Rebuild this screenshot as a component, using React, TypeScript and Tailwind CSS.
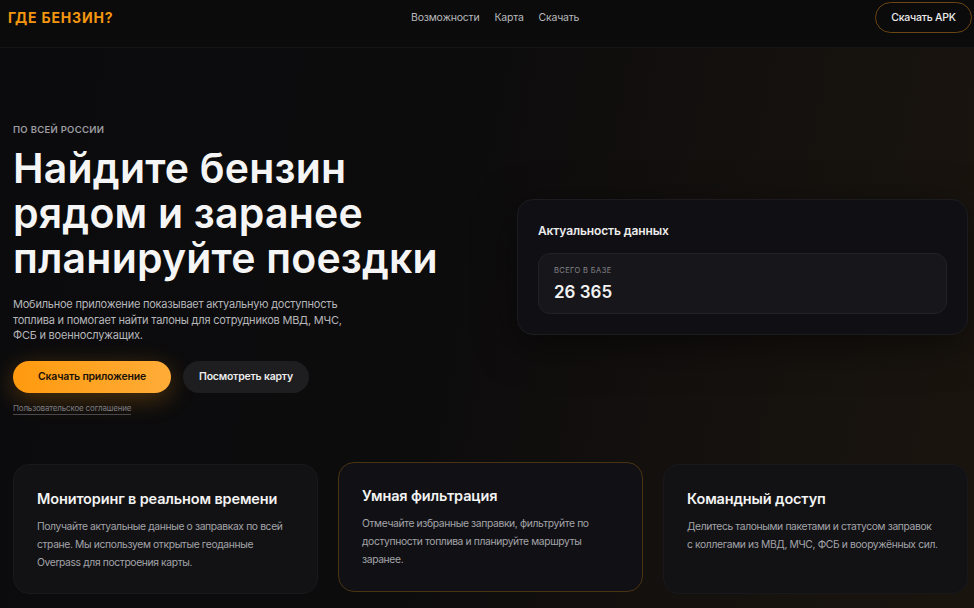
const features = [
  {
    title: 'Мониторинг в реальном времени',
    text: 'Получайте актуальные данные о заправках по всей стране. Мы используем открытые геоданные Overpass для построения карты.',
    accent: false,
  },
  {
    title: 'Умная фильтрация',
    text: 'Отмечайте избранные заправки, фильтруйте по доступности топлива и планируйте маршруты заранее.',
    accent: true,
  },
  {
    title: 'Командный доступ',
    text: 'Делитесь талоными пакетами и статусом заправок с коллегами из МВД, МЧС, ФСБ и вооружённых сил.',
    accent: false,
  },
];

const headline = ['Найдите бензин', 'рядом и заранее', 'планируйте поездки'];

export default function App() {
  return (
    <div
      className="min-h-[608px] w-full overflow-hidden bg-[#0b0b0d] text-white"
      style={{ fontFamily: 'Inter, "Noto Sans", sans-serif' }}
    >
      <header className="relative flex h-[48px] items-start justify-between border-b border-[#151517] bg-[#0b0b0c] pl-[8px] pr-[2px] pt-[2px]">
        <div className="flex h-[31px] items-center text-[14px] font-bold tracking-[0.06em] text-[#f5960f]">
          ГДЕ БЕНЗИН?
        </div>
        <nav className="absolute left-[411px] top-[2px] flex h-[31px] items-center gap-[15px] text-[10.5px] tracking-[-0.02em] text-[#b9b9bd]">
          <span>Возможности</span>
          <span>Карта</span>
          <span>Скачать</span>
        </nav>
        <button className="flex h-[31px] w-[97px] items-center justify-center rounded-full border border-[#6b4512] text-[10.5px] font-medium tracking-[-0.02em] text-[#ececec]">
          Скачать APK
        </button>
      </header>

      <main className="bg-[linear-gradient(100deg,#0b0b0d_0%,#0d0c0d_45%,#16120e_80%,#1a140e_100%)]">
        <section className="flex items-center justify-between pb-[47px] pl-[13px] pr-[6px] pt-[75px]">
          <div className="w-[450px]">
            <div className="text-[9.5px] font-semibold tracking-[0.03em] text-[#9c9ca2]">ПО ВСЕЙ РОССИИ</div>
            <h1 className="mt-[9px] text-[41px] font-semibold tracking-[0.005em] text-[#f5f5f5]">
              {headline.map((line) => (
                <span key={line} className="block h-[45px] leading-[45px]">
                  {line}
                </span>
              ))}
            </h1>
            <p className="mt-[16px] w-[345px] text-[11px] leading-[15.5px] tracking-[-0.02em] text-[#b6b6ba]">
              Мобильное приложение показывает актуальную доступность топлива и помогает найти талоны для сотрудников МВД, МЧС, ФСБ и военнослужащих.
            </p>
            <div className="mt-[17px] flex gap-[12px]">
              <button className="flex h-[32px] w-[158px] items-center justify-center rounded-full bg-[linear-gradient(90deg,#ff9a0e,#ffac38)] text-[10.5px] font-semibold tracking-[-0.02em] text-[#1a1206] shadow-[0_6px_24px_rgba(255,154,14,0.28)]">
                Скачать приложение
              </button>
              <button className="flex h-[32px] w-[126px] items-center justify-center rounded-full bg-[#1e1e21] text-[10.5px] font-semibold tracking-[-0.02em] text-[#ececec]">
                Посмотреть карту
              </button>
            </div>
            <div className="mt-[6px] inline-block border-b border-[#4a4a4e] text-[8px] leading-[12px] tracking-[-0.02em] text-[#7c7c82]">
              Пользовательское соглашение
            </div>
          </div>

          <div className="mt-[-6px] w-[451px] rounded-[16px] border border-[#1c1c20] bg-[#101014] px-[20px] pb-[20px] pt-[22px] shadow-[0_10px_40px_rgba(0,0,0,0.5)]">
            <div className="text-[12px] font-semibold tracking-[-0.01em] text-[#ececec]">Актуальность данных</div>
            <div className="mt-[13px] rounded-[12px] border border-[#222226] bg-[#17171b] px-[15px] pb-[10px] pt-[11px]">
              <div className="text-[7.5px] tracking-[0.05em] text-[#86868c]">ВСЕГО В БАЗЕ</div>
              <div className="mt-[4px] text-[17px] font-semibold leading-[22px] text-[#f3f3f3]">26 365</div>
            </div>
          </div>
        </section>

        <section className="grid grid-cols-3 gap-[20px] px-[13px] pb-[15px] pr-[6px]">
          {features.map((f) => (
            <div
              key={f.title}
              className={
                f.accent
                  ? 'h-[130px] rounded-[16px] border border-[#4a3312] bg-[#111115] px-[23px] pt-[23px] -mt-[2px]'
                  : 'h-[130px] rounded-[16px] border border-[#19191c] bg-[#121215] px-[23px] pt-[24px]'
              }
            >
              <div className="text-[14.5px] font-semibold leading-[20px] tracking-[-0.01em] text-[#f3f3f3]">{f.title}</div>
              <p className="mt-[8px] max-w-[252px] text-[10.3px] leading-[18px] tracking-[-0.035em] text-[#a3a3a8]">
                {f.text}
              </p>
            </div>
          ))}
        </section>
      </main>
    </div>
  );
}
